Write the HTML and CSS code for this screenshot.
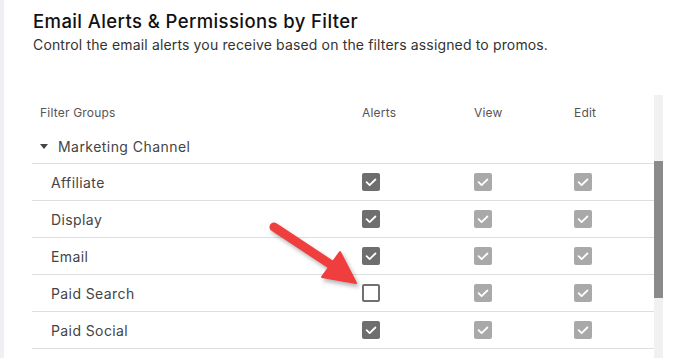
FILE: index.html
```html
<!DOCTYPE html>
<html>
<head>
<meta charset="utf-8">
<link rel="stylesheet" href="styles.css">
</head>
<body>
<div class="page">
  <h1 class="title">Email Alerts &amp; Permissions by Filter</h1>
  <p class="subtitle">Control the email alerts you receive based on the filters assigned to promos.</p>
  <div class="table-wrap">
    <div class="table">
      <div class="row head">
        <div class="cell name">Filter Groups</div>
        <div class="cell">Alerts</div>
        <div class="cell">View</div>
        <div class="cell">Edit</div>
      </div>
      <div class="row group">
        <div class="cell name"><span class="caret"></span>Marketing Channel</div>
        <div class="cell"></div>
        <div class="cell"></div>
        <div class="cell"></div>
      </div>
      <div class="row item">
        <div class="cell name">Affiliate</div>
        <div class="cell"><span class="cb on"><svg viewBox="0 0 18 18"><path d="M4.6 9.2l3 2.9 5.8-5.6"/></svg></span></div>
        <div class="cell"><span class="cb dis"><svg viewBox="0 0 18 18"><path d="M4.6 9.2l3 2.9 5.8-5.6"/></svg></span></div>
        <div class="cell"><span class="cb dis"><svg viewBox="0 0 18 18"><path d="M4.6 9.2l3 2.9 5.8-5.6"/></svg></span></div>
      </div>
      <div class="row item">
        <div class="cell name">Display</div>
        <div class="cell"><span class="cb on"><svg viewBox="0 0 18 18"><path d="M4.6 9.2l3 2.9 5.8-5.6"/></svg></span></div>
        <div class="cell"><span class="cb dis"><svg viewBox="0 0 18 18"><path d="M4.6 9.2l3 2.9 5.8-5.6"/></svg></span></div>
        <div class="cell"><span class="cb dis"><svg viewBox="0 0 18 18"><path d="M4.6 9.2l3 2.9 5.8-5.6"/></svg></span></div>
      </div>
      <div class="row item">
        <div class="cell name">Email</div>
        <div class="cell"><span class="cb on"><svg viewBox="0 0 18 18"><path d="M4.6 9.2l3 2.9 5.8-5.6"/></svg></span></div>
        <div class="cell"><span class="cb dis"><svg viewBox="0 0 18 18"><path d="M4.6 9.2l3 2.9 5.8-5.6"/></svg></span></div>
        <div class="cell"><span class="cb dis"><svg viewBox="0 0 18 18"><path d="M4.6 9.2l3 2.9 5.8-5.6"/></svg></span></div>
      </div>
      <div class="row item">
        <div class="cell name">Paid Search</div>
        <div class="cell"><span class="cb off"></span></div>
        <div class="cell"><span class="cb dis"><svg viewBox="0 0 18 18"><path d="M4.6 9.2l3 2.9 5.8-5.6"/></svg></span></div>
        <div class="cell"><span class="cb dis"><svg viewBox="0 0 18 18"><path d="M4.6 9.2l3 2.9 5.8-5.6"/></svg></span></div>
      </div>
      <div class="row item">
        <div class="cell name">Paid Social</div>
        <div class="cell"><span class="cb on"><svg viewBox="0 0 18 18"><path d="M4.6 9.2l3 2.9 5.8-5.6"/></svg></span></div>
        <div class="cell"><span class="cb dis"><svg viewBox="0 0 18 18"><path d="M4.6 9.2l3 2.9 5.8-5.6"/></svg></span></div>
        <div class="cell"><span class="cb dis"><svg viewBox="0 0 18 18"><path d="M4.6 9.2l3 2.9 5.8-5.6"/></svg></span></div>
      </div>
    </div>
    <div class="scrollbar"><div class="thumb"></div></div>
  </div>
  <svg class="arrow" width="674" height="358" viewBox="0 0 674 358">
    <line x1="270" y1="227" x2="329" y2="266" stroke="#f03e3f" stroke-width="9" stroke-linecap="round"/>
    <polygon points="352,283 318,277 336,252" fill="#f03e3f" stroke="#f03e3f" stroke-width="2" stroke-linejoin="round"/>
  </svg>
</div>
</body>
</html>
```

FILE: styles.css
```css
html, body {
  margin: 0;
  padding: 0;
  background: #fff;
}
body {
  font-family: Inter, "Noto Sans", sans-serif;
  color: #222;
}
.page {
  position: relative;
  height: 358px;
  border-left: 4px solid #eef0f4;
  padding-left: 29px;
  overflow: hidden;
  box-sizing: border-box;
}
.title {
  margin: 0;
  padding-top: 10px;
  font-size: 18.5px;
  line-height: 22px;
  font-weight: 500;
  color: #111;
  letter-spacing: 0.4px;
}
.subtitle {
  margin: 4px 0 0;
  font-size: 14px;
  line-height: 18px;
  color: #333;
  letter-spacing: 0.15px;
}
.table-wrap {
  display: flex;
  margin-top: 41px;
  margin-left: -1px;
  height: 263px;
}
.table {
  width: 622px;
}
.row {
  display: grid;
  grid-template-columns: 330px 112px 100px 80px;
  align-items: center;
}
.cell {
  display: flex;
  align-items: center;
}
.head {
  height: 34px;
  font-size: 12px;
  color: #555;
  letter-spacing: 0.2px;
}
.head .name {
  padding-left: 8px;
}
.group {
  height: 34px;
  border-bottom: 1px solid #dedede;
  font-size: 14px;
  color: #444;
  letter-spacing: 0.45px;
}
.group .name {
  padding-left: 8px;
}
.caret {
  width: 0;
  height: 0;
  border-left: 4.5px solid transparent;
  border-right: 4.5px solid transparent;
  border-top: 5px solid #444;
  margin-right: 10px;
}
.item {
  height: 36px;
  border-bottom: 1px solid #dedede;
  font-size: 14px;
  color: #444;
  letter-spacing: 0.4px;
}
.item .name {
  padding-left: 19px;
}
.cb {
  display: block;
  width: 18px;
  height: 18px;
  border-radius: 2px;
  box-sizing: border-box;
}
.cb svg {
  display: block;
  width: 18px;
  height: 18px;
  fill: none;
  stroke: #fff;
  stroke-width: 1.8;
  stroke-linecap: round;
  stroke-linejoin: round;
}
.cb.on {
  background: #6e6e6e;
}
.cb.dis {
  background: #a9a9a9;
}
.cb.off {
  border: 2px solid #707070;
  background: #fff;
}
.scrollbar {
  width: 9px;
  background: #f1f1f1;
  padding-top: 66px;
  box-sizing: border-box;
}
.thumb {
  height: 137px;
  background: #8a8a8a;
}
.arrow {
  position: absolute;
  left: 0;
  top: 0;
  pointer-events: none;
  filter: drop-shadow(2px 3px 2px rgba(0,0,0,0.3));
}
```
